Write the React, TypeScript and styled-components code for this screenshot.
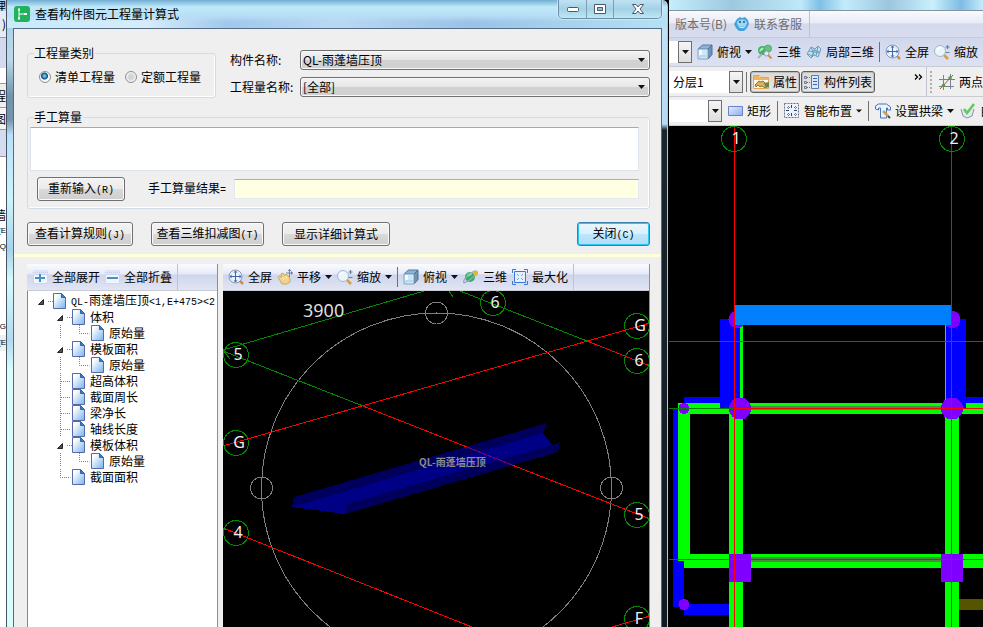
import React from "react";
import styled, { createGlobalStyle, css } from "styled-components";

const cjk = `"Noto Sans CJK SC", sans-serif`;

const GlobalStyle = createGlobalStyle`
  * { box-sizing: border-box; }
  body { margin: 0; background: #000; }
  button, select, input, textarea { font: inherit; color: inherit; }
`;

const Page = styled.div`
  display: grid;
  grid-template-columns: 6px minmax(0, 662fr) minmax(0, 315fr);
  height: 100vh;
  overflow: hidden;
  font: 12px/16px ${cjk};
  color: #000;
`;

/* ---------- strip of the main window left of the dialog ---------- */

const Strip = styled.aside`
  display: flex;
  flex-direction: column;
  overflow: hidden;
  background: #fff;
`;

const StripCell = styled.div<{ $h: number; $bg?: string; $line?: boolean; $latin?: boolean }>`
  display: flex;
  flex: none;
  align-items: center;
  justify-content: flex-end;
  height: ${(p) => p.$h}px;
  background: ${(p) => p.$bg ?? "#fff"};
  border-bottom: ${(p) => (p.$line ? "1px solid #9a9a9a" : "0")};
  white-space: nowrap;
  ${(p) => p.$latin && css`font: 8px/16px "Liberation Sans", sans-serif;`}
`;

const stripCells: { h: number; bg?: string; line?: boolean; text?: string; latin?: boolean }[] = [
  { h: 11, bg: "#b5d6f0", text: "理" },
  { h: 27, bg: "#e6e9f6", line: true, text: ")" },
  { h: 30, bg: "#d3d9ee" },
  { h: 16, line: true },
  { h: 24, bg: "#efefef", line: true, text: "程" },
  { h: 22, bg: "#f4f4f4", line: true, text: "图" },
  { h: 27, bg: "#d6dcf0", line: true },
  { h: 50 },
  { h: 16, text: "墙" },
  { h: 16, text: "[E", latin: true },
  { h: 16, text: "[Q", latin: true },
  { h: 64 },
  { h: 16, text: "[G", latin: true },
  { h: 16, bg: "#efefef", text: "[E", latin: true },
];

/* ---------- dialog window ---------- */

const Dialog = styled.section`
  display: flex;
  flex-direction: column;
  min-width: 0;
  border: 1px solid #46545f;
  border-width: 0 1px;
  border-right-color: #b6c6cf;
  border-radius: 0 6px 0 0;
  background: linear-gradient(180deg, #c4e3f7 0, #b5dcf5 124px, #1a262e 130px, #101a22 100%) right / 6px 100% no-repeat,
    linear-gradient(180deg, #9ccff0 0, #bcd8ea 60px, #6f94ad 96px, #7694ac 120px, #b9e0fb 135px, #cdf3fb 200px, #a5d2ec 250px, #d6fbfd 280px, #b1daf0 340px, #d9fdfd 370px);
`;

const TitleBar = styled.header`
  display: flex;
  flex: none;
  align-items: flex-start;
  justify-content: space-between;
  height: 28px;
  padding: 0 5px 0 7px;
  border-radius: 0 6px 0 0;
  background: linear-gradient(180deg, #72aed4 0, #bfeaf9 7px, #b9dff7 15px, transparent 22px),
    linear-gradient(90deg, #c9eafa 0, #d6ecfa 140px, #a1c8ec 220px, #b9d8f3 50%, #9bc2e6 70%, #b4e2f4 100%);
`;

const Title = styled.h1`
  display: flex;
  align-items: center;
  gap: 5px;
  margin: 0;
  padding-top: 5px;
  font-size: 12px;
  font-weight: 400;
  line-height: 17px;
`;

const WindowButtons = styled.div`
  display: flex;
  border: 1px solid #6d8ea6;
  border-top: 0;
  border-radius: 0 0 5px 5px;
  overflow: hidden;
  box-shadow: 0 0 0 1px #d5eef9aa;
`;

const WindowButton = styled.button<{ $w: number }>`
  display: grid;
  place-items: center;
  width: ${(p) => p.$w}px;
  height: 18px;
  padding: 0;
  border: 0;
  border-right: 1px solid #7d9eb5;
  background: linear-gradient(180deg, #bfe3f3, #a4d0e6 50%, #bce9f4);
  &:last-child { border-right: 0; }
`;

const Client = styled.div`
  display: flex;
  flex: 1;
  flex-direction: column;
  min-height: 0;
  margin: 0 5px 0 6px;
  border: 1px solid #526c83;
  border-width: 1px 1px 0 1px;
  background: #efefef;
  padding-top: 16px;
`;

const Inset = styled.div`
  display: flex;
  flex-direction: column;
  gap: 11px;
  padding: 0 11px 0 13px;
`;

const TopRow = styled.div`
  display: flex;
  gap: 14px;
`;

const Group = styled.fieldset`
  min-width: 0;
  margin: 0;
  padding: 0;
  border: 1px solid #d2dce6;
  border-radius: 3px;
  box-shadow: inset -1px -1px #fff;
`;

const Legend = styled.legend`
  margin-left: 6px;
  padding: 0 1px 0 0;
  line-height: 16px;
`;

const Radios = styled.div`
  display: flex;
  gap: 10px;
  padding: 8px 14px 12px 11px;
`;

const RadioLabel = styled.label`
  display: flex;
  align-items: center;
  gap: 4px;
  white-space: nowrap;
`;

const Radio = styled.input`
  appearance: none;
  width: 12px;
  height: 12px;
  margin: 0;
  border: 1px solid #8b8f94;
  border-radius: 50%;
  background: radial-gradient(circle, #d2d2d2 0 2px, #f6f6f6 5px);
  &:checked {
    background: radial-gradient(circle at 45% 40%, #58c4ee 0 1px, #12476f 3px, #f4f8fb 4px);
  }
`;

const Fields = styled.div`
  display: grid;
  flex: 1;
  grid-template-columns: 66px minmax(0, 1fr);
  align-content: start;
  align-items: center;
  gap: 7px 4px;
  padding-top: 5px;
`;

const SelectBox = styled.div`
  display: grid;
  align-items: center;
  > * { grid-area: 1 / 1; }
  > svg { justify-self: end; margin-right: 5px; pointer-events: none; }
`;

const Select = styled.select`
  appearance: none;
  width: 100%;
  height: 20px;
  padding: 0 16px 0 2px;
  border: 1px solid #707070;
  border-radius: 3px;
  background: linear-gradient(#f2f2f2, #e6e6e6 50%, #d2d2d2 50%, #d0d0d0);
  box-shadow: inset 0 0 0 1px #f8f8f8;
  line-height: 16px;
`;

const ManualBody = styled.div`
  display: flex;
  flex-direction: column;
  gap: 6px;
  padding: 2px 10px 7px 2px;
`;

const Formula = styled.textarea`
  display: block;
  width: 100%;
  height: 44px;
  border: 1px solid #dce3ea;
  border-top-color: #a5a9b0;
  background: #fff;
  resize: none;
  outline: 0;
`;

const ResultRow = styled.div`
  display: flex;
  align-items: center;
  padding-left: 7px;
`;

const ResultLabel = styled.label`
  margin: 0 8px 0 23px;
  white-space: nowrap;
`;

const ResultInput = styled.input`
  flex: 1;
  min-width: 0;
  height: 20px;
  border: 1px solid #e3e9ef;
  border-top-color: #abadb3;
  background: #ffffe1;
  outline: 0;
`;

const PushButton = styled.button<{ $w: number; $primary?: boolean }>`
  min-width: ${(p) => p.$w}px;
  height: 24px;
  padding: 0 4px;
  border: 1px solid #707070;
  border-radius: 3px;
  background: linear-gradient(#f3f3f3, #ebebeb 50%, #dadada 50%, #cecece);
  box-shadow: inset 0 0 0 1px #fafafa;
  line-height: 16px;
  white-space: nowrap;
  ${(p) =>
    p.$primary &&
    css`
      margin-left: auto;
      border-color: #3c7fb1;
      background: linear-gradient(#eaf6fd, #d9f0fc 50%, #bee6fd 50%, #b0dcf3);
      box-shadow: inset 0 0 0 1px #2cc5f3;
    `}
`;

const Actions = styled.div`
  display: flex;
  gap: 18px;
  padding: 13px 11px 8px 13px;
`;

const YellowRule = styled.hr`
  flex: none;
  width: 100%;
  height: 3px;
  margin: 0 0 7px;
  border: 0;
  background: #ffffd8;
`;

const Panels = styled.div`
  display: grid;
  flex: 1;
  grid-template-columns: minmax(0, 191fr) minmax(0, 427fr);
  gap: 5px;
  min-height: 0;
  padding: 0 11px 0 13px;
`;

const Panel = styled.div`
  display: flex;
  flex-direction: column;
  min-width: 0;
  min-height: 0;
  border-right: 1px solid #8d8f98;
`;

const Drawing = styled.svg`
  display: block;
  flex: 1;
  width: 100%;
  min-height: 0;
  background: #000;
  shape-rendering: crispEdges;
`;

/* ---------- toolbars ---------- */

const barFill = {
  blue: "linear-gradient(#fbfbfe, #e7eaf7 38%, #cfd6ec 42%, #e1e5f4)",
  menu: "linear-gradient(#fafafd, #e8ebf7 45%, #d4d9ec 50%, #d7dcef)",
  lilac: "linear-gradient(#d2d8ec, #dce1f2)",
  grey: "#efefef",
};

const Toolbar = styled.div<{ $fill: keyof typeof barFill; $h: number; $gap?: number; $pad?: number }>`
  display: flex;
  flex: none;
  align-items: center;
  gap: ${(p) => p.$gap ?? 5}px;
  height: ${(p) => p.$h}px;
  padding-left: ${(p) => p.$pad ?? 0}px;
  background: ${(p) => barFill[p.$fill]};
  border-bottom: 1px solid #c9cbd2;
  white-space: nowrap;
  overflow: hidden;
`;

const Tool = styled.button<{ $pressed?: boolean; $muted?: boolean }>`
  display: flex;
  flex: none;
  align-items: center;
  gap: 4px;
  height: 22px;
  padding: 0;
  border: 0;
  background: none;
  color: ${(p) => (p.$muted ? "#6e6e6e" : "#000")};
  line-height: 16px;
  ${(p) =>
    p.$pressed &&
    css`
      padding: 0 2px;
      border: 1px solid #5e5e5e;
      border-radius: 3px;
      background: linear-gradient(#dadada, #e6e6e6);
      box-shadow: inset 0 0 0 1px #bdbdbd;
    `}
`;

const ToolPair = styled.div`
  display: flex;
  flex: none;
  gap: 1px;
`;

const Divider = styled.span<{ $light?: boolean }>`
  flex: none;
  align-self: ${(p) => (p.$light ? "stretch" : "center")};
  width: 1px;
  height: ${(p) => (p.$light ? "auto" : "20px")};
  background: ${(p) => (p.$light ? "#bfc3cd" : "#707070")};
`;

const Chevron = styled.button`
  display: grid;
  margin-left: auto;
  padding: 0 0 10px;
  border: 0;
  background: none;
`;

const Grip = styled.span`
  flex: none;
  width: 2px;
  height: 22px;
  margin-right: 4px;
  background: repeating-linear-gradient(#b0b0b0 0 2px, transparent 2px 4px);
`;

const Combo = styled.div<{ $w: number }>`
  display: flex;
  flex: none;
  align-items: center;
  justify-content: space-between;
  align-self: center;
  width: ${(p) => p.$w}px;
  height: 22px;
  padding-left: 4px;
  background: #fff;
`;

const ComboButton = styled.button`
  display: grid;
  place-items: center;
  width: 14px;
  height: 22px;
  margin-left: auto;
  padding: 0;
  border: 1px solid #6f6f6f;
  background: linear-gradient(#f5f5f5, #dedede);
`;

/* ---------- tree ---------- */

const Tree = styled.ul`
  flex: 1;
  min-height: 0;
  margin: 0;
  padding: 2px 0 0 6px;
  border-left: 1px solid #828790;
  background: #fff;
  list-style: none;
  overflow: hidden;
`;

const TreeRow = styled.li`
  display: flex;
  align-items: center;
  height: 16px;
  white-space: nowrap;
`;

const Toggle = styled.button`
  display: block;
  height: 16px;
  padding: 0;
  border: 0;
  background: none;
`;

const TreeText = styled.span`
  padding-left: 5px;
`;

const HalfWidth = styled.span`
  font: 10px/16px "Liberation Mono", monospace;
`;

/* Latin runs in the dialog font are half the width of a Chinese character. */
const Mixed = ({ text }: { text: string }) => (
  <>
    {text.split(/([\x20-\x7e]+)/).map((part, i) => (i % 2 ? <HalfWidth key={i}>{part}</HalfWidth> : part))}
  </>
);

/* ---------- main window ---------- */

const Main = styled.main`
  display: flex;
  flex-direction: column;
  min-width: 0;
  min-height: 0;
  padding-left: 1px;
  background: #000;
`;

const GlassTop = styled.div`
  flex: none;
  height: 11px;
  border-bottom: 1px solid #8295a5;
  background: linear-gradient(90deg, #c5eefb 0, #9dc9e0 20%, #bfe9f8 42%, #80bfe6 48%, #c3ecfa 56%, #9cc6df 70%, #c9f0fb 84%, #7fbbe4 93%, #c5ecfa);
`;

/* ---------- icons ---------- */

const Icon = ({ children, w = 16, h = 16 }: { children: React.ReactNode; w?: number; h?: number }) => (
  <svg width={w} height={h} viewBox={`0 0 ${w} ${h}`} fill="none" aria-hidden="true">
    {children}
  </svg>
);

const Arrow = ({ small }: { small?: boolean }) =>
  small ? (
    <Icon w={6} h={4}><path d="M0 .5h6L3 3.500z" fill="#111" /></Icon>
  ) : (
    <Icon w={7} h={4}><path d="M0 0h7L3.500 4z" fill="#111" /></Icon>
  );

const MoreIcon = () => (
  <Icon w={9} h={6}>
    <path d="M1 .5L3.500 3 1 5.500M5 .5L7.500 3 5 5.500" stroke="#000" strokeWidth="1.300" />
  </Icon>
);

const CubeIcon = () => (
  <Icon>
    <path d="M1 5L5.500 1H15l-4 4z" fill="#8db4d6" stroke="#557a9e" />
    <path d="M11 5l4-4v9.500L11 15z" fill="#6f93b7" stroke="#4c6d8e" />
    <path d="M1 5h10v10H1z" fill="#cfe6f7" stroke="#7fa5c6" />
    <path d="M4 5.500v6.500h6.500M4 12l-3 3" stroke="#a5c9e4" />
    <path d="M2 6h3v5H2z" fill="#f3faff" />
  </Icon>
);

const OrbitIcon = ({ lens }: { lens?: boolean }) =>
  lens ? (
    <Icon>
      <circle cx="5.500" cy="6.500" r="4.500" fill="#3bb163" />
      <path d="M2.500 6c1-2 3-3 4-2S5 7 2.500 8z" fill="#a8e8b7" />
      <circle cx="11" cy="4.500" r="3.500" fill="#5ac878" stroke="#6f9b7c" />
      <path d="M1 14l4-4" stroke="#a4aebb" strokeWidth="2" />
      <circle cx="9.500" cy="9.500" r="2.500" fill="#dcebf6" stroke="#8f9fb1" />
      <path d="M11 11l3.500 3.500" stroke="#c98f56" strokeWidth="2" />
    </Icon>
  ) : (
    <Icon>
      <circle cx="7" cy="8" r="5" fill="#36ac6c" />
      <path d="M4 6c1-2 4-3 5-2S7 7 4 8z" fill="#9ce5ad" />
      <path d="M1 14C-1 11 8 2 13 2c4 1-5 9-12 12z" stroke="#93a7bb" strokeWidth="1.200" />
      <circle cx="12.500" cy="4" r="2.500" fill="#e8b32f" />
    </Icon>
  );

const GridCubeIcon = () => (
  <Icon>
    <path d="M1 10L5 3l4 2 3-3 3 3-3 8-4-2-3 3z" fill="#c4e2f2" stroke="#6f9dbd" />
    <path d="M3 7l10 2M5 3l3 8M9 5l-4 9M12 2l-2 10M2 10l5 2M7 6l7 2" stroke="#6d9dbe" />
  </Icon>
);

const FullIcon = () => (
  <Icon>
    <path d="M12 12l3 3" stroke="#c98f56" strokeWidth="2.500" />
    <circle cx="7.500" cy="7.500" r="6.500" fill="#e8f1fc" stroke="#8b9bb0" />
    <path d="M7.500 3v9M3 7.500h9" stroke="#3f68b2" />
    <path d="M7.500 1.500l-2 2h4zM7.500 13.500l-2-2h4zM1.500 7.500l2-2v4zM13.500 7.500l-2-2v4z" fill="#3f68b2" />
  </Icon>
);

const ZoomIcon = () => (
  <Icon>
    <path d="M10 11l4 4" stroke="#d3a23e" strokeWidth="2.500" />
    <circle cx="6" cy="7" r="5.500" fill="#e9f4fb" stroke="#a9b6c3" />
    <path d="M3 6c1-2 3-3 4-2" stroke="#fff" strokeWidth="1.500" />
    <path d="M13.500 1v4M11.500 3h4M11.500 8.500h4" stroke="#5b83a8" strokeWidth="1.200" />
  </Icon>
);

const PanIcon = () => (
  <Icon>
    <path d="M1 8l2-1 2 2-1-4 2-1 2 3 1-2 4 4v4l-3 2H5z" fill="#f0d48c" stroke="#cda961" />
    <path d="M5 8l2 3M8 7l2 3" stroke="#fff0bd" />
    <path d="M12.500 0v8M9 4h7" stroke="#6d87a8" />
    <path d="M12.500 0l-2 2h4zM16 4l-2-2v4z" fill="#6d87a8" />
  </Icon>
);

const MaxIcon = () => (
  <Icon>
    <path d="M2.500 2.500h11v11h-11z" fill="#e5effc" stroke="#3f78d2" />
    <path d="M.5 4V.5H4M12 .5h3.500V4M15.500 12v3.500H12M4 15.500H.5V12" stroke="#3f78d2" />
    <path d="M5 5l2 2M11 5L9 7M5 11l2-2M11 11L9 9" stroke="#3f78d2" strokeDasharray="1 1" />
  </Icon>
);

const PlusMinusIcon = ({ plus }: { plus?: boolean }) => (
  <Icon w={15}>
    <path d="M0 1h15v14H0z" fill="#dce5fa" />
    <path d="M0 3.500h15" stroke="#c0cdf0" strokeDasharray="1 1" />
    <path d="M.5 5.500h14v9H.5z" fill="#f0f5ff" stroke="#cad7f6" />
    <path d={plus ? "M2 9h10M7 5v8" : "M2 9h11"} stroke="#4691c4" strokeWidth="2" />
  </Icon>
);

const SupportIcon = () => (
  <Icon>
    <path d="M3 3l3-2 2 1 3-1 3 3 1 4-2 4-3 3H5l-3-3-2-4z" fill="#45a4dd" />
    <ellipse cx="8" cy="7" rx="5" ry="3.500" fill="#9cdaf7" />
    <circle cx="6" cy="6" r="1" fill="#174b72" />
    <circle cx="10" cy="6" r="1" fill="#174b72" />
    <path d="M4.500 10c2 2 5 2 7 0" stroke="#fff" />
  </Icon>
);

const PropsIcon = () => (
  <Icon>
    <path d="M.5 3V1.500h6l1 2h8v11H.5z" fill="#fff8e7" stroke="#e2a64e" />
    <path d="M1 2h5l1 2h8v2H1z" fill="#f0b55c" />
    <path d="M2 11l4-4 2 1 2-1 4 4-2 3-3-2-2 1-2-2-2 2z" fill="#d9b25a" stroke="#8c7138" />
    <path d="M11 9l5-1v5l-3 1z" fill="#5b8a5b" />
  </Icon>
);

const ListIcon = () => (
  <Icon>
    <path d="M7.500 1.500h7v13h-7z" fill="#d9e7fa" stroke="#5a7cae" />
    <path d="M9 4.500h4M9 7.500h4M9 10.500h4" stroke="#3165b0" />
    <path d="M.5 2.500h2v2h-2zM.5 7.500h2v2h-2zM.5 12.500h2v2h-2z" stroke="#687991" />
    <path d="M3 3.500h3M3 8.500h3M3 13.500h3" stroke="#687991" strokeDasharray="1 1" />
  </Icon>
);

const TwoPointIcon = () => (
  <Icon>
    <path d="M4.500 1v15M11.500 0v15M0 5.500h16M0 12.500h15" stroke="#75839a" />
    <path d="M1 15L14 1" stroke="#c7453a" />
    <circle cx="4.500" cy="11.500" r="1.800" fill="#5b9c45" />
    <circle cx="11" cy="4" r="1.800" fill="#5b9c45" />
  </Icon>
);

const RectIcon = () => (
  <Icon w={15}>
    <defs>
      <linearGradient id="rectFill" x1="0" y1="0" x2="1" y2="1">
        <stop stopColor="#e4eeff" /><stop offset="1" stopColor="#8badee" />
      </linearGradient>
    </defs>
    <path d="M.5 3.500h14v9H.5z" fill="url(#rectFill)" stroke="#6785c6" />
  </Icon>
);

const SmartIcon = () => (
  <Icon>
    <path d="M.5.500h14v14H.5z" fill="#edf3fa" stroke="#66758b" strokeDasharray="2 1" />
    <path d="M7.500 2v3M7.500 10v3M2 7.500h3M10 7.500h3" stroke="#33465e" />
    <path d="M4.500 3v3M3 4.500h3M11.500 3v3M10 4.500h3M4.500 10v3M3 11.500h3M11.500 10v3M10 11.500h3" stroke="#6c7d94" strokeDasharray="1 1" />
  </Icon>
);

const ArchIcon = () => (
  <Icon>
    <path d="M.5 6V3l3-2h8l4 3v3h-3V5h-1v10h-6V5h-2v2z" fill="#eaf3fd" stroke="#4375b8" />
    <path d="M8 8l5 5" stroke="#d6a04a" strokeWidth="2.500" />
    <path d="M13 13l2 2" stroke="#394a60" strokeWidth="2" />
  </Icon>
);

const CheckIcon = () => (
  <Icon>
    <path d="M1 6l2 7 4 2 5-2 2-7" fill="#e2e8ed" stroke="#8795a2" />
    <path d="M4 6l3 4 7-9" stroke="#5fcb5f" strokeWidth="2.500" />
  </Icon>
);

const LogoIcon = () => (
  <Icon>
    <rect width="16" height="16" rx="3" fill="#21b35c" />
    <path d="M5 3.500v9M5 8h5" stroke="#fff" />
    <path d="M4 2.500h2v2H4zM4 11.500h2v2H4zM10 7h3v2h-3z" fill="#fff" />
  </Icon>
);

const PageIcon = () => (
  <Icon w={13}>
    <defs>
      <linearGradient id="pageFill" x1="0" y1="0" x2="1" y2="1">
        <stop offset=".2" stopColor="#fdfeff" /><stop offset="1" stopColor="#73b4ec" />
      </linearGradient>
    </defs>
    <path d="M.5.5h8l4 4v11H.5z" fill="url(#pageFill)" stroke="#5a68a8" />
    <path d="M8.500.5v4h4z" fill="#3b7fc6" stroke="#35659f" />
  </Icon>
);

type GuideKind = "blank" | "line" | "tee" | "end" | "elbow" | "toggle";
const guidePaths: Record<GuideKind, string> = {
  blank: "",
  line: "M7.500 0v14",
  tee: "M7.500 0v16M8 8.500h10",
  end: "M7.500 0v8.500h10",
  elbow: "M7.500 0v8.500h10",
  toggle: "M14 8.500h5",
};

const GuideMark = ({ kind }: { kind: GuideKind }) => (
  <Icon w={19}>
    {kind === "toggle" && <path d="M4.500 11.500h5v-5z" fill="#505050" stroke="#262626" />}
    <path d={guidePaths[kind]} stroke="#808080" strokeDasharray="1 1" />
  </Icon>
);

const treeRows: { guides: GuideKind[]; text: string }[] = [
  { guides: ["toggle"], text: "QL-雨蓬墙压顶<1,E+475><2" },
  { guides: ["blank", "toggle"], text: "体积" },
  { guides: ["blank", "line", "elbow"], text: "原始量" },
  { guides: ["blank", "toggle"], text: "模板面积" },
  { guides: ["blank", "line", "elbow"], text: "原始量" },
  { guides: ["blank", "tee"], text: "超高体积" },
  { guides: ["blank", "tee"], text: "截面周长" },
  { guides: ["blank", "tee"], text: "梁净长" },
  { guides: ["blank", "tee"], text: "轴线长度" },
  { guides: ["blank", "toggle"], text: "模板体积" },
  { guides: ["blank", "line", "elbow"], text: "原始量" },
  { guides: ["blank", "end"], text: "截面面积" },
];

/* ---------- drawings ---------- */

const Bubble = ({ x, y, label, dx = 2 }: { x: number; y: number; label: string; dx?: number }) => (
  <g>
    <circle cx={x} cy={y} r="12.500" fill="none" stroke="#008a00" />
    <text x={x + dx} y={y + 5} fill="#eee" fontSize="16" textAnchor="middle" fontFamily="Noto Sans, sans-serif">
      {label}
    </text>
  </g>
);

const View3D = () => (
  <Drawing viewBox="223 291 427 336" preserveAspectRatio="xMinYMin slice" role="img" aria-label="三维视图">
    <g fill="none" stroke="#808080">
      <circle cx="436.500" cy="488" r="175" />
      <circle cx="436.500" cy="313" r="11" />
      <circle cx="261.500" cy="488" r="11" />
      <circle cx="611.500" cy="488" r="11" />
      <path d="M425 313.500h23M261.500 477v22M611.500 477v22" />
    </g>
    <path d="M294 497L547 423l-4 10 9 12 8-3-2 10-213 62-15-2-38-5z" fill="#00005c" />
    <path d="M292 507l251-74 9 12-205 59-2 10-15-2z" fill="#000086" />
    <g fill="none" stroke="#008a00">
      <path d="M223 350L424 291M223 351L363 406M460 291L587 341M449 291l4 6M223 350l7 9" />
    </g>
    <g fill="none" stroke="#f00">
      <path d="M363 406L467 447M512 465L650 519M587 341L650 366M223 446L650 323M223 528L472 627M612 627L650 616" />
      <path d="M467 447L512 465" stroke="#700070" />
    </g>
    <Bubble x={236} y={355} label="5" />
    <Bubble x={493} y={303} label="6" />
    <Bubble x={637} y={326} label="G" dx={3} />
    <Bubble x={637} y={361} label="6" />
    <Bubble x={236} y={443} label="G" dx={3} />
    <Bubble x={236} y={533} label="4" />
    <Bubble x={637} y={515} label="5" />
    <Bubble x={637} y={619} label="F" />
    <text x="303" y="317" fill="#ddd" fontSize="18" fontFamily="Noto Sans, sans-serif">3900</text>
    <text x="419" y="466" fill="#8c8c8c" fontSize="10" fontWeight="700" fontFamily="Noto Sans CJK SC, sans-serif">
      QL-雨蓬墙压顶
    </text>
  </Drawing>
);

const PlanView = () => (
  <Drawing viewBox="669 126 314 501" preserveAspectRatio="xMinYMin slice" role="img" aria-label="平面图">
    <path fill="#0f0" d="M729 325h14v302h-14zM945 325h14v302h-14zM678 403h305v11H678zM678 408h12v153h-12zM678 554h305v7H678zM684 561h299v7H684z" />
    <path fill="#4c8a43" d="M751 406h190v4H751zM751 557h190v5H751z" />
    <path fill="#00f" d="M720 319h20v89h-20zM946 319h20v89h-20zM684 397h36v6h-36zM966 397h17v6h-17zM673 408h5v153h-5zM673 561h11v46h-11zM684 604h45v11h-45z" />
    <path fill="#550" d="M959 599h24v11h-24z" />
    <g fill="#8000ff">
      <circle cx="737" cy="319.500" r="8.500" />
      <circle cx="952" cy="319.500" r="8.500" />
      <circle cx="740" cy="408.500" r="11" />
      <circle cx="952" cy="408.500" r="11" />
      <circle cx="684" cy="408.500" r="5.500" />
      <circle cx="684" cy="604.500" r="5.500" />
      <path d="M729 554h22v28h-22zM941 554h22v28h-22z" />
    </g>
    <path fill="#0080ff" d="M735 305h216v20H735z" />
    <path stroke="#008000" d="M669 341.500h65M669 408.500h65M669 559.500h65" />
    <path stroke="#f00" d="M734 341.500h249M734 408.500h249M734 559.500h249M734.500 126v501M951.500 126v501" />
    <Bubble x={734} y={139} label="1" />
    <Bubble x={952} y={139} label="2" />
  </Drawing>
);

const Preview = () => (
  <Panel>
    <Toolbar $fill="blue" $h={27} $pad={5}>
      <Tool><FullIcon />全屏</Tool>
      <Tool><PanIcon />平移<Arrow /></Tool>
      <Tool><ZoomIcon />缩放<Arrow /></Tool>
      <Divider />
      <Tool><CubeIcon />俯视<Arrow /></Tool>
      <Tool><OrbitIcon />三维</Tool>
      <Tool><MaxIcon />最大化</Tool>
      <Divider $light />
    </Toolbar>
    <View3D />
  </Panel>
);

export default function App() {
  return (
    <Page>
      <GlobalStyle />
      <Strip>
        {stripCells.map((c, i) => (
          <StripCell key={i} $h={c.h} $bg={c.bg} $line={c.line} $latin={c.latin}>{c.text}</StripCell>
        ))}
      </Strip>

      <Dialog>
        <TitleBar>
          <Title><LogoIcon />查看构件图元工程量计算式</Title>
          <WindowButtons>
            <WindowButton $w={28} aria-label="最小化">
              <Icon w={12} h={5}><rect x=".5" y=".5" width="11" height="4" rx="1" fill="#fff" stroke="#4d5866" /></Icon>
            </WindowButton>
            <WindowButton $w={27} aria-label="还原">
              <Icon w={12} h={10}>
                <path d="M.5.5h11v9H.5z" fill="#fff" stroke="#4d5866" />
                <path d="M3.500 3.500h5v3h-5z" fill="#8ec4df" stroke="#4d5866" />
              </Icon>
            </WindowButton>
            <WindowButton $w={47} aria-label="关闭窗口">
              <Icon w={12} h={10}>
                <path d="M.5.5h3.500l2 2.500 2-2.500h3.500L8 5l3.500 4.500H8L6 7 4 9.500H.5L4 5z" fill="#fff" stroke="#4d5866" />
              </Icon>
            </WindowButton>
          </WindowButtons>
        </TitleBar>

        <Client>
          <Inset>
            <TopRow>
              <Group>
                <Legend>工程量类别</Legend>
                <Radios>
                  <RadioLabel><Radio type="radio" name="kind" defaultChecked />清单工程量</RadioLabel>
                  <RadioLabel><Radio type="radio" name="kind" />定额工程量</RadioLabel>
                </Radios>
              </Group>
              <Fields>
                <label htmlFor="part">构件名称:</label>
                <SelectBox>
                  <Select id="part"><option>QL-雨蓬墙压顶</option></Select>
                  <Arrow />
                </SelectBox>
                <label htmlFor="quantity">工程量名称:</label>
                <SelectBox>
                  <Select id="quantity"><option>[全部]</option></Select>
                  <Arrow />
                </SelectBox>
              </Fields>
            </TopRow>
            <Group>
              <Legend>手工算量</Legend>
              <ManualBody>
                <Formula aria-label="手工算量" />
                <ResultRow>
                  <PushButton $w={88}><Mixed text="重新输入(R)" /></PushButton>
                  <ResultLabel htmlFor="result"><Mixed text="手工算量结果=" /></ResultLabel>
                  <ResultInput id="result" />
                </ResultRow>
              </ManualBody>
            </Group>
          </Inset>
          <Actions>
            <PushButton $w={106}><Mixed text="查看计算规则(J)" /></PushButton>
            <PushButton $w={113}><Mixed text="查看三维扣减图(T)" /></PushButton>
            <PushButton $w={108}>显示详细计算式</PushButton>
            <PushButton $w={73} $primary><Mixed text="关闭(C)" /></PushButton>
          </Actions>
          <YellowRule />
          <Panels>
            <Panel>
              <Toolbar $fill="blue" $h={27} $pad={6}>
                <Tool><PlusMinusIcon plus />全部展开</Tool>
                <Tool><PlusMinusIcon />全部折叠</Tool>
                <Divider $light />
              </Toolbar>
              <Tree>
                {treeRows.map((row, i) => (
                  <TreeRow key={i}>
                    {row.guides.map((g, j) =>
                      g === "toggle" ? (
                        <Toggle key={j} aria-label="折叠"><GuideMark kind={g} /></Toggle>
                      ) : (
                        <GuideMark key={j} kind={g} />
                      )
                    )}
                    <PageIcon />
                    <TreeText><Mixed text={row.text} /></TreeText>
                  </TreeRow>
                ))}
              </Tree>
            </Panel>
            <Preview />
          </Panels>
        </Client>
      </Dialog>

      <Main>
        <GlassTop />
        <Toolbar $fill="menu" $h={27} $gap={7} $pad={6}>
          <Tool $muted>版本号(B)</Tool>
          <Tool $muted><SupportIcon />联系客服</Tool>
          <Divider $light />
        </Toolbar>
        <Toolbar $fill="lilac" $h={29}>
          <Combo $w={23}><ComboButton aria-label="选择"><Arrow /></ComboButton></Combo>
          <Tool><CubeIcon />俯视<Arrow /></Tool>
          <Tool><OrbitIcon lens />三维</Tool>
          <Tool><GridCubeIcon />局部三维</Tool>
          <Divider />
          <Tool><FullIcon />全屏</Tool>
          <Tool><ZoomIcon />缩放</Tool>
        </Toolbar>
        <Toolbar $fill="grey" $h={30} $gap={3}>
          <Combo $w={74}>分层1<ComboButton aria-label="选择分层"><Arrow /></ComboButton></Combo>
          <Divider />
          <ToolPair>
            <Tool $pressed><PropsIcon />属性</Tool>
            <Tool $pressed><ListIcon />构件列表</Tool>
          </ToolPair>
          <Chevron aria-label="更多"><MoreIcon /></Chevron>
          <Divider $light />
          <Grip />
          <Tool><TwoPointIcon />两点</Tool>
        </Toolbar>
        <Toolbar $fill="grey" $h={29} $gap={6}>
          <Combo $w={53}><ComboButton aria-label="选择构件"><Arrow /></ComboButton></Combo>
          <Tool><RectIcon />矩形</Tool>
          <Divider />
          <Tool><SmartIcon />智能布置<Arrow small /></Tool>
          <Divider />
          <Tool><ArchIcon />设置拱梁<Arrow /></Tool>
          <Tool><CheckIcon />自动</Tool>
        </Toolbar>
        <PlanView />
      </Main>
    </Page>
  );
}
